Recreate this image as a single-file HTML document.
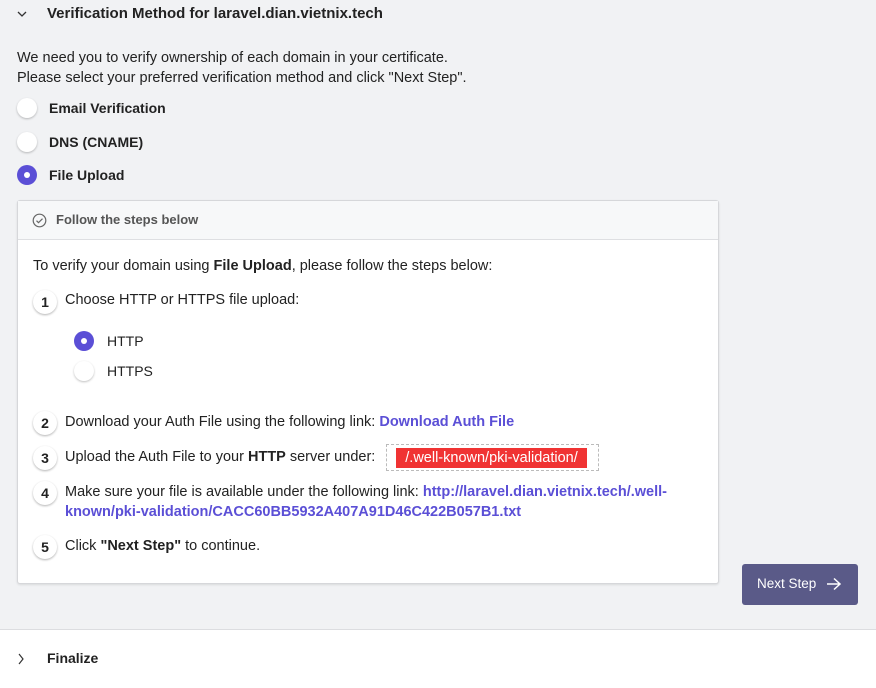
<!DOCTYPE html>
<html><head><style>
*{margin:0;padding:0;box-sizing:border-box}
body{width:876px;height:688px;overflow:hidden;font-family:"Liberation Sans",sans-serif;font-size:14px;color:#222;background:#fff;position:relative}
.top{position:absolute;left:0;top:0;width:876px;height:630px;background:#f1f2f4;border-bottom:1px solid #dcdde0}
.a{position:absolute;white-space:nowrap}
.b{font-weight:bold}
.radio{position:absolute;width:20px;height:20px;border-radius:50%;background:#fff;box-shadow:0 1px 2px rgba(0,0,0,.25)}
.radio.on{background:#5b4fd6;box-shadow:none}
.radio.on::after{content:"";position:absolute;left:7px;top:7px;width:6px;height:6px;border-radius:50%;background:#fff}
.card{position:absolute;left:17px;top:200px;width:702px;height:384px;background:#fff;border:1px solid #d6d7da;border-radius:3px;box-shadow:0 1px 2px rgba(0,0,0,.1)}
.ch{position:absolute;left:0;top:0;width:100%;height:39px;background:#f7f8f9;border-bottom:1px solid #dedfe2}
.num{position:absolute;width:24px;height:24px;border-radius:50%;background:#fff;box-shadow:0 1px 2px rgba(0,0,0,.3);font-weight:bold;font-size:14px;text-align:center;line-height:24px}
.lnk{color:#5b4fd6;font-weight:bold}
.btn{position:absolute;left:742px;top:564px;width:116px;height:41px;background:#5a5a88;border-radius:3px;color:#fff;font-size:13.5px}
</style></head><body>
<div class="top"></div>
<svg class="a" style="left:16px;top:9px" width="12" height="10"><path d="M2 3l4 4 4-4" fill="none" stroke="#333" stroke-width="1.3"/></svg>
<div class="a b" style="left:47px;top:5px;font-size:15px">Verification Method for laravel.dian.vietnix.tech</div>
<div class="a" style="left:17px;top:50px;font-size:14.5px">We need you to verify ownership of each domain in your certificate.</div>
<div class="a" style="left:17px;top:70px;font-size:14.5px">Please select your preferred verification method and click "Next Step".</div>
<div class="radio" style="left:17px;top:98px"></div><div class="a b" style="left:49px;top:100px">Email Verification</div>
<div class="radio" style="left:17px;top:132px"></div><div class="a b" style="left:49px;top:134px">DNS (CNAME)</div>
<div class="radio on" style="left:17px;top:165px"></div><div class="a b" style="left:49px;top:167px">File Upload</div>
<div class="card">
 <div class="ch">
  <svg class="a" style="left:14px;top:12px" width="15" height="15"><circle cx="7.5" cy="7.5" r="6.3" fill="none" stroke="#666" stroke-width="1.2"/><path d="M4.5 7.7l2 2 4-4" fill="none" stroke="#666" stroke-width="1.2"/></svg>
  <div class="a b" style="left:38px;top:11px;font-size:13px;color:#555">Follow the steps below</div>
 </div>
 <div class="a" style="left:15px;top:57px;font-size:14.5px">To verify your domain using <b>File Upload</b>, please follow the steps below:</div>
 <div class="num" style="left:15px;top:89px">1</div><div class="a" style="left:47px;top:91px;font-size:14.5px">Choose HTTP or HTTPS file upload:</div>
 <div class="radio on" style="left:56px;top:130px"></div><div class="a" style="left:89px;top:132px">HTTP</div>
 <div class="radio" style="left:56px;top:160px"></div><div class="a" style="left:89px;top:162px">HTTPS</div>
 <div class="num" style="left:15px;top:210px">2</div><div class="a" style="left:47px;top:213px;font-size:14.5px">Download your Auth File using the following link: <span class="lnk">Download Auth File</span></div>
 <div class="num" style="left:15px;top:245px">3</div><div class="a" style="left:47px;top:248px;font-size:14.5px">Upload the Auth File to your <b>HTTP</b> server under:</div>
 <div class="a" style="left:368px;top:243px;width:213px;height:27px;border:1px dashed #bbb"></div>
 <div class="a" style="left:378px;top:247px;width:191px;height:20px;background:#f03333;color:#fff;font-size:14.5px;line-height:20px;text-align:center">/.well-known/pki-validation/</div>
 <div class="num" style="left:15px;top:280px">4</div><div class="a" style="left:47px;top:283px;font-size:14.5px">Make sure your file is available under the following link: <span class="lnk">http://laravel.dian.vietnix.tech/.well-</span></div>
 <div class="a lnk" style="left:47px;top:303px;font-size:14.5px">known/pki-validation/CACC60BB5932A407A91D46C422B057B1.txt</div>
 <div class="num" style="left:15px;top:334px">5</div><div class="a" style="left:47px;top:337px;font-size:14.5px">Click <b>"Next Step"</b> to continue.</div>
</div>
<div class="btn"><span class="a" style="left:15px;top:12px">Next Step</span>
<svg class="a" style="left:84px;top:13px" width="16" height="14"><path d="M1 7h13M8 1.5l6 5.5-6 5.5" fill="none" stroke="#fff" stroke-width="1.5"/></svg></div>
<svg class="a" style="left:17px;top:653px" width="8" height="12"><path d="M2 1l4 5-4 5" fill="none" stroke="#333" stroke-width="1.2"/></svg>
<div class="a b" style="left:47px;top:650px">Finalize</div>
</body></html>
